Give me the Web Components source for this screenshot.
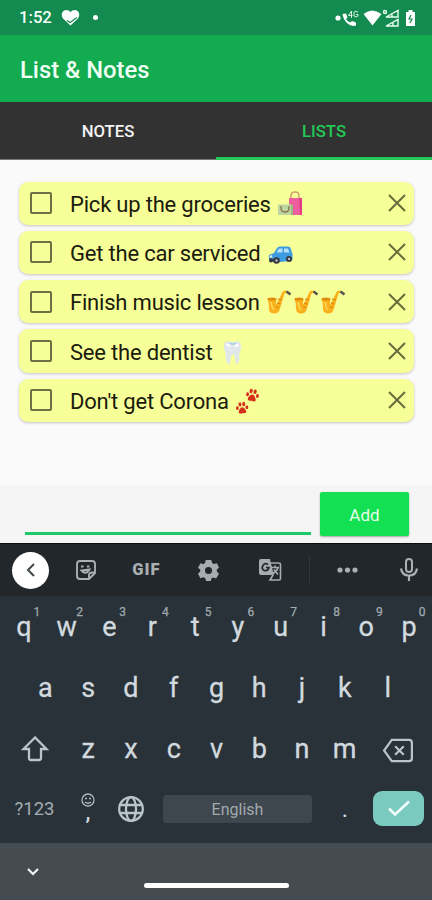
<!DOCTYPE html>
<html lang="en"><head><meta charset="utf-8"><title>List &amp; Notes</title>
<style>
html,body{margin:0;height:100%}
body{width:432px;height:900px;overflow:hidden;background:#fafafa;font-family:Roboto,"Liberation Sans",sans-serif}
</style></head><body>
<notes-app></notes-app>
<script>
const define=(name,css,html)=>customElements.define(name,class extends HTMLElement{
  constructor(){super();this.attachShadow({mode:'open'}).innerHTML=`<style>*{box-sizing:border-box}svg{display:block;overflow:visible}${css}</style>${typeof html==='function'?html(this):html}`;}
});

define('status-bar',`:host{display:flex;align-items:center;height:35px;background:#128a50;color:#f4fff8;padding:0 15px 0 19px;box-sizing:border-box}
.t{font-size:16.700px;font-weight:500;line-height:35px;width:42px}.g{flex:1}`,
`<span class="t">1:52</span>
<svg width="19" height="17" viewBox="0 0 19 17"><path d="M9.500 16.500L2 9.500C-1 5 2 1 5 1Q8 1 9.500 3Q11 1 14 1C17 1 20 5 17 9.500Z" fill="#fff"/><path d="M6 11.500l3 2 7-5" fill="none" stroke="#128a50" stroke-width="1.200"/></svg>
<svg width="7" height="7" style="margin-left:12px"><circle cx="3.500" cy="3.500" r="2.500" fill="#fff"/></svg><span class="g"></span>
<svg width="82" height="20" viewBox="0 0 82 20" fill="#fff"><circle cx="3" cy="10" r="2.600"/>
<path d="M7.500 6L11 5.500l1.500 4-1.500 1.500q1.500 2.500 4 3.500l2-1.500 4 1.500v3q-5 1.500-9-2.500T7.500 6Z"/><g fill="none" stroke="#d5f3df" stroke-width="1"><path d="M16.500 3L13.500 7.500h4M16.500 3v7M23 4q-3-1.500-4 0v4q2 2 4 0V6.500h-2"/></g>
<path d="M28.500 6Q37 -1 46.500 6L37.500 17.500Z"/>
<g fill="none" stroke="#e8fff0" stroke-width="1.400"><circle cx="50" cy="4" r="1.500"/><path d="M51 9h12V2.500zM57 6.500v2.500M51 18h12v-6.500zM58 15v3"/></g>
<path d="M71 4h2.500V2h4v2H80v14h-9z"/><path d="M76 7l-2 4h3l-2 4" fill="none" stroke="#128a50" stroke-width="1.200"/></svg>`);

define('app-header',`:host{display:flex;align-items:center;height:67px;background:#12ab50;color:#effff4;padding:2px 20px 0;font-size:23.800px;font-weight:500;box-sizing:border-box}`,`<slot></slot>`);

define('tab-item',`:host{flex:1;display:flex;align-items:center;justify-content:center;height:58px;background:#323232;color:#f4f4f4;font-size:16.700px;font-weight:500;border-bottom:1px solid #777;box-sizing:border-box;padding-top:2px}
:host([active]){color:#22c957;border-bottom:3px solid #22c957;padding-top:4px}`,`<slot></slot>`);
define('tab-strip',`:host{display:flex}`,`<slot></slot>`);

define('list-item',`:host{display:flex;align-items:center;height:43.300px;background:#f6ff98;border-radius:9px;box-shadow:0 1px 3px #00000038;padding:0 8.500px 0 11px;box-sizing:border-box;color:#1b1b0e}
.b{width:22px;height:22px;border:2px solid #6d7043;border-radius:2px;margin-right:18px}.l{flex:1;display:flex;align-items:center;font-size:22px;letter-spacing:-.2px;line-height:26px;white-space:pre;padding-top:3px}`,
`<span class="b"></span><span class="l"><slot></slot></span><svg width="18" height="18" viewBox="0 0 18 18"><path d="M1 1l16 16M17 1l-16 16" stroke="#696b3c" stroke-width="2"/></svg>`);
define('item-emoji',`:host{display:inline-block;font-family:"Noto Color Emoji",sans-serif;font-size:21.500px;letter-spacing:.25px;line-height:26px;margin-left:1px}`,`<slot></slot>`);
define('shopping-bags',`:host{display:block;margin:-2px 0 0 2px}`,`<svg width="25" height="25" viewBox="0 0 25 25"><path d="M13 9V5q0-4 4-4t4 4v4" fill="none" stroke="#cda06b" stroke-width="1.500"/><path d="M11 7h13v17H11z" fill="#ee5d9d"/><path d="M21 7h3v17h-2z" fill="#e03f87"/><path d="M0 13.500h13V24H0z" fill="#bdd5a0"/><path d="M13 13.500h2V24h-2z" fill="#98b782"/><path d="M3 15v2q0 4 4 4t4-4v-2" fill="none" stroke="#8a7a53" stroke-width="1.400"/></svg>`);
define('blue-car',`:host{display:block;margin:3px 0 0 2px}`,`<svg width="25" height="18" viewBox="0 0 25 18"><path d="M1 9l5-2 3-5q1-1.500 3-1.500h8q2 0 2.500 1.500L24.500 8v5q0 1.500-2 1.800L8 16.500 2 15Q.5 14 1 9z" fill="#3d9be0"/><path d="M8.500 6.500L11 2.500h3.500v4zM16 2.500h4l1.500 4H16z" fill="#b5e2f5"/><path d="M1.500 12l6 1.500v2.500L2 14.500z" fill="#24587f"/><circle cx="3" cy="10.500" r="1.300" fill="#e4f4d9"/><g fill="#34373d"><circle cx="8.500" cy="14.500" r="3.300"/><circle cx="21" cy="13" r="3"/><circle cx="3" cy="14.500" r="2"/></g><circle cx="8.500" cy="14.500" r="1.300" fill="#b4bbc1"/><circle cx="21" cy="13" r="1.200" fill="#b4bbc1"/></svg>`);
define('gold-sax',`:host{display:block;width:24px;margin:-3px 1px 0 2px}`,`<svg width="24" height="25" viewBox="0 0 24 25"><path d="M.5 9.500l9 1q-1 3.500 0 5L15 4q1.500-3.500 5-2l1 2q-3-1.500-4 2l-4.500 15q-1.500 4-6 3.500-5-.5-4.500-6Q2 14 .5 9.500z" fill="#f9b21d"/><ellipse cx="5" cy="10" rx="4.500" ry="1.500" fill="#df8c0d"/><path d="M4 13q1 6 3 8" fill="none" stroke="#ffd75a" stroke-width="1.500"/><path d="M11 10l4 1M10 14l3.500 1M9 18l3 .5" stroke="#d98510" stroke-width="1.200"/><path d="M19.500 2.500l4 3" stroke="#55534b" stroke-width="2.500"/></svg>`);
const paw='<ellipse cx="1.500" cy="6" rx="1.500" ry="2"/><ellipse cx="4.500" cy="2.300" rx="1.600" ry="2.300"/><ellipse cx="8.500" cy="2.300" rx="1.600" ry="2.300"/><ellipse cx="11.500" cy="6" rx="1.500" ry="2"/><path d="M6.500 5.500c2 0 4 3.500 4 5s-1.500 2-4 1.300c-2.500.7-4 .2-4-1.300s2-5 4-5z"/>';
define('paw-prints',`:host{display:block;margin:0 0 0 2px}`,`<svg width="24" height="24" viewBox="0 0 24 24" fill="#d5301c"><g transform="translate(10 -1) rotate(10 6 6)">${paw}</g><g transform="translate(0 12) rotate(-5 6 6) scale(.95)">${paw}</g></svg>`);

define('entry-bar',`:host{display:flex;height:58px;padding:7px 23px 0 25px;background:#f5f5f5;gap:9px;box-sizing:border-box}
.i{width:286px;height:43px;border-bottom:3px solid #20c968}.b{width:89px;height:44px;background:#13e052;border-radius:2px;display:flex;align-items:center;justify-content:center;color:#e4ffe9;font-size:17px;padding-top:2px;box-shadow:0 1px 2px #0005}`,`<div class="i"></div><div class="b"><slot></slot></div>`);

const ic={
sticker:'<path d="M4 1h12q3 0 3 3v9l-6 6H4q-3 0-3-3V4q0-3 3-3zM19 12.500h-3q-3 0-3 3V19M5 6.500h2.500M11 6.500h2.500M5.500 10.500q4.500 5 8-1z" fill="none" stroke="#a9b0b4" stroke-width="1.900"/>',
gear:'<path fill-rule="evenodd" fill="#a5adb2" d="M8 0h6l.7 3.200 2 1.100 3.200-1L22 8l-2.300 2v2l2.300 2.300-3 5-3.200-1-1.800 1L13.500 22h-5l-.8-3-2-1-3.200 1L0 14.500 2.300 12v-2L0 8l2.600-4.500 3 1L7.500 3zM11 7.300a3.700 3.700 0 1 0 0 7.400 3.700 3.700 0 0 0 0-7.400z"/>',
translate:'<path d="M2 0h9l3 16H2q-2 0-2-2V2q0-2 2-2z" fill="#a5adb2"/><path d="M9 5.500Q6 3.500 4 6.500t1 5q4 1 5-3H7" fill="none" stroke="#23292d" stroke-width="1.700"/><path d="M11 4h9q1.500 0 1.500 1.500v14q0 1.500-1.500 1.500h-9l3-5zM13 8.500h7M16 6.500v2M19 8.500q-1 4-5 6M15 10.500l4 5" fill="none" stroke="#a5adb2" stroke-width="1.600"/>',
mic:'<rect x="6" y="1" width="6" height="13" rx="3" fill="none" stroke="#a9b1b6" stroke-width="2"/><path d="M1 10.500q1 7 8 7t8-7M9 18v5" fill="none" stroke="#a9b1b6" stroke-width="2.200"/>'};
define('keyboard-toolbar',`:host{display:grid;grid-template-columns:61px 50px 71px 53px 74px 76px 47px;height:53px;background:#22272b;border-top:1px solid #090d11;align-items:center;justify-items:center;box-sizing:border-box}
.c{width:37px;height:37px;border-radius:50%;background:#fff;display:grid;place-items:center}.gif{font:900 16.500px/20px Roboto,sans-serif;letter-spacing:1px;color:#a9aeb1}.m{width:100%;height:28px;border-left:1px solid #30373b;display:flex;align-items:center;justify-content:center}`,
`<span class="c"><svg width="8" height="14" viewBox="0 0 8 14"><path d="M7 1L1 7l6 6" fill="none" stroke="#42474a" stroke-width="2"/></svg></span>
<svg width="20" height="20">${ic.sticker}</svg><span class="gif">GIF</span><svg width="21" height="21" viewBox="0 0 22 22">${ic.gear}</svg><svg width="22" height="22" style="margin-right:4px">${ic.translate}</svg>
<span class="m"><svg width="21" height="6" fill="#a9b0b4"><circle cx="3" cy="3" r="2.600"/><circle cx="10.500" cy="3" r="2.600"/><circle cx="18" cy="3" r="2.600"/></svg></span><svg width="18" height="24">${ic.mic}</svg>`);

define('key-cap',`:host{display:flex;align-items:center;justify-content:center;width:42.800px;height:61px;position:relative;color:#d2dadf;font-size:27px;line-height:32px;-webkit-text-stroke:.3px #d2dadf}
.h{position:absolute;right:5px;top:9px;font-size:12px;line-height:14px;color:#a0aab0;-webkit-text-stroke:.25px #a0aab0}`,e=>`<slot></slot><span class="h">${e.getAttribute('hint')||''}</span>`);
define('key-row',`:host{display:flex;height:61px;justify-content:center}`,`<slot></slot>`);
const keys=s=>[...s].map(k=>`<key-cap>${k}</key-cap>`).join('');
define('soft-keyboard',`:host{display:block;height:247px;background:#293239;padding-left:1px;box-sizing:border-box}
.fn{width:66px;display:flex;align-items:center;justify-content:center}.fn.up{padding-left:2px}.last{display:flex;height:59px;align-items:center;margin-left:-1px}.n{width:69px;text-align:center;color:#a3acb2;font-size:18.500px}.e{width:38px;display:flex;flex-direction:column;align-items:center;margin-top:-3px}.comma{font-size:22px;line-height:18px;height:17px;color:#d2dadf;margin-top:-3px;font-weight:500}.globe{width:47px;display:flex;justify-content:center}.space{width:149px;height:28px;background:#3e474d;border-radius:4px;margin-left:9px;text-align:center;font-size:16px;line-height:29px;color:#a1a9ae}.dot{width:66px;text-align:center;color:#d2dadf;font-size:24px}.enter{width:51px;height:35px;border-radius:9px;background:#7bcabf;display:grid;place-items:center;margin-left:-5px}`,
`<key-row>${[...'qwertyuiop'].map((k,i)=>`<key-cap hint="${(i+1)%10}">${k}</key-cap>`).join('')}</key-row>
<key-row>${keys('asdfghjkl')}</key-row>
<key-row><span class="fn up"><svg width="26" height="25" viewBox="0 0 26 25"><path d="M13 1.500L1.500 13H7v9q0 2 2 2h8q2 0 2-2v-9h5.500z" fill="none" stroke="#b9c5ca" stroke-width="2.300"/></svg></span>${keys('zxcvbnm')}<span class="fn"><svg width="30" height="23" viewBox="0 0 31 24" style="margin:3px 2px 0 0"><path d="M9 1h18q3 0 3 3v16q0 3-3 3H9L1 12zM12.500 7.500l9 9M21.500 7.500l-9 9" fill="none" stroke="#b9c5ca" stroke-width="2.300"/></svg></span></key-row>
<div class="last"><span class="n">?123</span><span class="e"><svg width="14" height="14"><circle cx="7" cy="7" r="6" fill="none" stroke="#aeb8bd" stroke-width="1.300"/><path d="M4 5.500h2M8 5.500h2M4 9q3 2.500 6 0" fill="none" stroke="#aeb8bd" stroke-width="1.300"/></svg><span class="comma">,</span></span>
<span class="globe"><svg width="26" height="26" viewBox="0 0 26 26" fill="none" stroke="#b9c5ca" stroke-width="2.300"><circle cx="13" cy="13" r="11.800"/><ellipse cx="13" cy="13" rx="5" ry="11.800"/><path d="M2.500 9h21M2.500 17h21"/></svg></span><span class="space">English</span><span class="dot">.</span><span class="enter"><svg width="22" height="17"><path d="M1 8.500l6 6L21 1.500" fill="none" stroke="#f3ffff" stroke-width="2.500"/></svg></span></div>`);

define('nav-bar',`:host{display:grid;grid-template-columns:144px 145px 1fr;height:57px;background:#444b51;box-sizing:border-box}
svg{margin:25px 0 0 27px}.p{height:5px;margin-top:40px;border-radius:3px;background:#fff}`,`<svg width="12" height="8"><path d="M1 1l5 5 5-5" fill="none" stroke="#f4f7f8" stroke-width="2.200"/></svg><span class="p"></span>`);

define('notes-app',`:host{display:flex;flex-direction:column;width:432px;height:900px;background:#fafafa}
.list{height:325px;padding:21.500px 18px 0 19px;display:flex;flex-direction:column;gap:6px;background:#fafafa}`,
`<status-bar></status-bar><app-header>List &amp; Notes</app-header>
<tab-strip><tab-item>NOTES</tab-item><tab-item active>LISTS</tab-item></tab-strip>
<div class="list"><list-item>Pick up the groceries <shopping-bags></shopping-bags></list-item>
<list-item>Get the car serviced <blue-car></blue-car></list-item>
<list-item>Finish music lesson <gold-sax></gold-sax><gold-sax></gold-sax><gold-sax></gold-sax></list-item>
<list-item>See the dentist <item-emoji>🦷</item-emoji></list-item>
<list-item>Don't get Corona <paw-prints></paw-prints></list-item></div>
<entry-bar>Add</entry-bar><keyboard-toolbar></keyboard-toolbar><soft-keyboard></soft-keyboard><nav-bar></nav-bar>`);
</script></body></html>
